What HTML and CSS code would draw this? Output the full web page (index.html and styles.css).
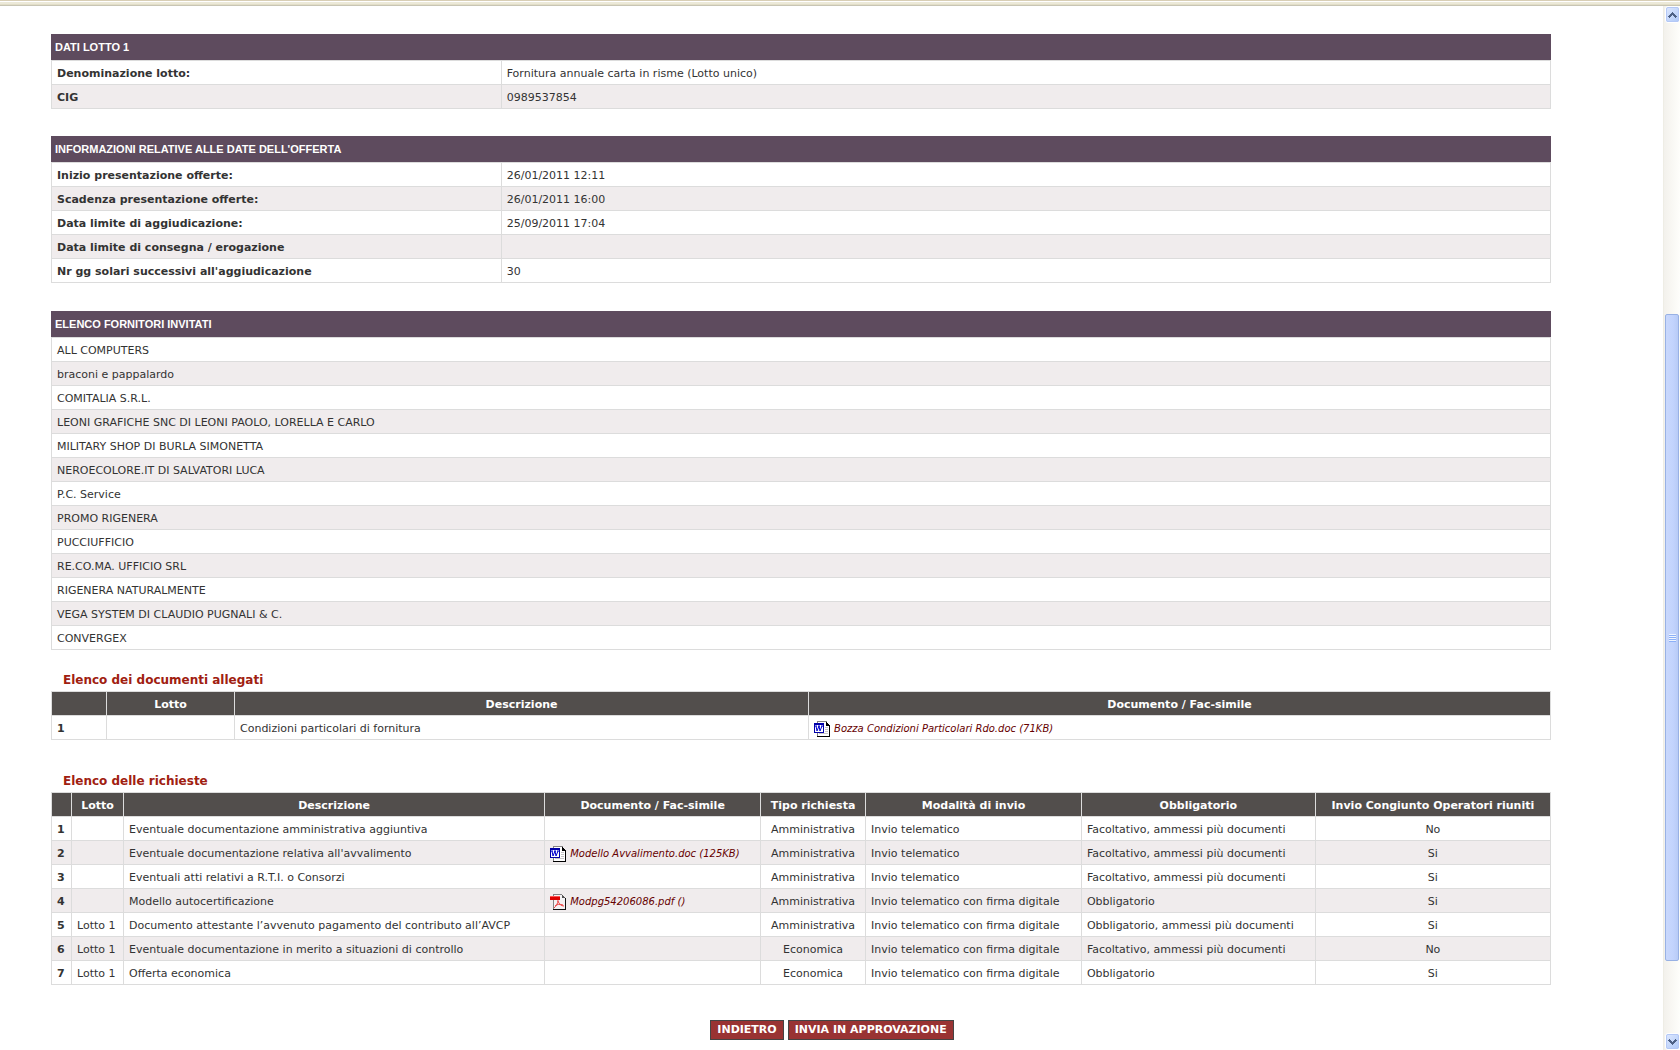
FILE: index.html
```html
<!DOCTYPE html>
<html lang="it">
<head>
<meta charset="utf-8">
<title>Riepilogo RdO</title>
<link rel="stylesheet" href="styles.css">
</head>
<body>
<svg class="defs" aria-hidden="true">
  <symbol id="icon-doc" viewBox="0 0 16 16">
    <path fill="#fff" d="M4 1h8l3 3v11H4z"/>
    <path fill="#848284" d="M3 0h10v1H4v14H3z"/>
    <path fill="#000" d="M12 1h1v1h1v1h1v1h1v12H3v-1h12V5h-3z"/>
    <path fill="#c6c3c6" d="M11 6h3v1h-3zM11 8h3v1h-3zM11 10h3v1h-3zM5 12h9v1H5z"/>
    <path fill="#0000a8" d="M0 2h10v10H0z"/>
    <path fill="#fff" d="M1 4h8v7H1z"/>
    <path fill="none" stroke="#0000d0" d="M1 5h2M4 5h2M2 5l1 5 2-5 1 5 2-5M7 5h2"/>
  </symbol>
  <symbol id="icon-pdf" viewBox="0 0 16 16">
    <path fill="#f4f2f4" d="M4 1h8l3 3v11H4z"/>
    <path fill="#848284" d="M3 0h9v1H4v14H3z"/>
    <path fill="#555" d="M12 1h1v1h1v1h1v1h-3z"/>
    <path fill="#111" d="M15 4h1v12H3v-1h12z"/>
    <path fill="#d00" d="M0 2h10v4H0z"/>
    <path fill="#f55" d="M0 2h10v1H0z"/>
    <path fill="none" stroke="#e44" d="M8 6c0 4-2 6-4 8M8 7c1 3 3 5 6 5M5 12c2-2 5-2 8-1"/>
  </symbol>
</svg>
<div class="toolbar-edge"></div>
<div class="viewport">
  <main class="content">
    <table class="sheet pairs">
      <caption>DATI LOTTO 1</caption>
      <tbody>
        <tr><th scope="row">Denominazione lotto:</th><td>Fornitura annuale carta in risme (Lotto unico)</td></tr>
        <tr><th scope="row">CIG</th><td>0989537854</td></tr>
      </tbody>
    </table>

    <table class="sheet pairs">
      <caption>INFORMAZIONI RELATIVE ALLE DATE DELL'OFFERTA</caption>
      <tbody>
        <tr><th scope="row">Inizio presentazione offerte:</th><td>26/01/2011 12:11</td></tr>
        <tr><th scope="row">Scadenza presentazione offerte:</th><td>26/01/2011 16:00</td></tr>
        <tr><th scope="row">Data limite di aggiudicazione:</th><td>25/09/2011 17:04</td></tr>
        <tr><th scope="row">Data limite di consegna / erogazione</th><td></td></tr>
        <tr><th scope="row">Nr gg solari successivi all'aggiudicazione</th><td>30</td></tr>
      </tbody>
    </table>

    <table class="sheet suppliers">
      <caption>ELENCO FORNITORI INVITATI</caption>
      <tbody>
        <tr><td>ALL COMPUTERS</td></tr>
        <tr><td>braconi e pappalardo</td></tr>
        <tr><td>COMITALIA S.R.L.</td></tr>
        <tr><td>LEONI GRAFICHE SNC DI LEONI PAOLO, LORELLA E CARLO</td></tr>
        <tr><td>MILITARY SHOP DI BURLA SIMONETTA</td></tr>
        <tr><td>NEROECOLORE.IT DI SALVATORI LUCA</td></tr>
        <tr><td>P.C. Service</td></tr>
        <tr><td>PROMO RIGENERA</td></tr>
        <tr><td>PUCCIUFFICIO</td></tr>
        <tr><td>RE.CO.MA. UFFICIO SRL</td></tr>
        <tr><td>RIGENERA NATURALMENTE</td></tr>
        <tr><td>VEGA SYSTEM DI CLAUDIO PUGNALI &amp; C.</td></tr>
        <tr><td>CONVERGEX</td></tr>
      </tbody>
    </table>

    <section class="listing">
      <h2>Elenco dei documenti allegati</h2>
      <table class="sheet">
        <colgroup><col class="w-index"><col class="w-lot"><col class="w-text"><col></colgroup>
        <thead>
          <tr><th></th><th scope="col">Lotto</th><th scope="col">Descrizione</th><th scope="col">Documento / Fac-simile</th></tr>
        </thead>
        <tbody>
          <tr><th scope="row">1</th><td></td><td>Condizioni particolari di fornitura</td><td><a class="file" href="#"><svg><use href="#icon-doc"/></svg>Bozza Condizioni Particolari Rdo.doc (71KB)</a></td></tr>
        </tbody>
      </table>
    </section>

    <section class="listing">
      <h2>Elenco delle richieste</h2>
      <table class="sheet">
        <colgroup><col class="w-number"><col class="w-lotto"><col class="w-description"><col class="w-medium"><col class="w-type"><col class="w-medium"><col class="w-wide"><col></colgroup>
        <thead>
          <tr><th></th><th scope="col">Lotto</th><th scope="col">Descrizione</th><th scope="col">Documento / Fac-simile</th><th scope="col">Tipo richiesta</th><th scope="col">Modalità di invio</th><th scope="col">Obbligatorio</th><th scope="col">Invio Congiunto Operatori riuniti</th></tr>
        </thead>
        <tbody>
          <tr><th scope="row">1</th><td></td><td>Eventuale documentazione amministrativa aggiuntiva</td><td></td><td class="mid">Amministrativa</td><td>Invio telematico</td><td>Facoltativo, ammessi più documenti</td><td class="mid">No</td></tr>
          <tr><th scope="row">2</th><td></td><td>Eventuale documentazione relativa all'avvalimento</td><td><a class="file" href="#"><svg><use href="#icon-doc"/></svg>Modello Avvalimento.doc (125KB)</a></td><td class="mid">Amministrativa</td><td>Invio telematico</td><td>Facoltativo, ammessi più documenti</td><td class="mid">Si</td></tr>
          <tr><th scope="row">3</th><td></td><td>Eventuali atti relativi a R.T.I. o Consorzi</td><td></td><td class="mid">Amministrativa</td><td>Invio telematico</td><td>Facoltativo, ammessi più documenti</td><td class="mid">Si</td></tr>
          <tr><th scope="row">4</th><td></td><td>Modello autocertificazione</td><td><a class="file" href="#"><svg><use href="#icon-pdf"/></svg>Modpg54206086.pdf ()</a></td><td class="mid">Amministrativa</td><td>Invio telematico con firma digitale</td><td>Obbligatorio</td><td class="mid">Si</td></tr>
          <tr><th scope="row">5</th><td>Lotto 1</td><td>Documento attestante l’avvenuto pagamento del contributo all’AVCP</td><td></td><td class="mid">Amministrativa</td><td>Invio telematico con firma digitale</td><td>Obbligatorio, ammessi più documenti</td><td class="mid">Si</td></tr>
          <tr><th scope="row">6</th><td>Lotto 1</td><td>Eventuale documentazione in merito a situazioni di controllo</td><td></td><td class="mid">Economica</td><td>Invio telematico con firma digitale</td><td>Facoltativo, ammessi più documenti</td><td class="mid">No</td></tr>
          <tr><th scope="row">7</th><td>Lotto 1</td><td>Offerta economica</td><td></td><td class="mid">Economica</td><td>Invio telematico con firma digitale</td><td>Obbligatorio</td><td class="mid">Si</td></tr>
        </tbody>
      </table>
    </section>

    <div class="actions">
      <button type="button">INDIETRO</button>
      <button type="button">INVIA IN APPROVAZIONE</button>
    </div>
  </main>

  <div class="scrollbar">
    <button type="button" class="arrow" aria-label="Scorri su"><svg viewBox="0 0 9 6"><path d="M4 0h1v1h1v1h1v1h1v1h1v1H8v1H7V5H6V4H5V3H4v1H3v1H2v1H1V5H0V4h1V3h1V2h1V1h1z"/></svg></button>
    <div class="track-above"></div>
    <div class="thumb"><span class="grip"></span></div>
    <div class="track-below"></div>
    <button type="button" class="arrow" aria-label="Scorri giù"><svg viewBox="0 0 9 6"><path d="M4 6h1V5h1V4h1V3h1V2h1V1H8V0H7v1H6v1H5v1H4V2H3V1H2V0H1v1H0v1h1v1h1v1h1v1h1z"/></svg></button>
  </div>
</div>
</body>
</html>
```
FILE: styles.css
```css
* { box-sizing: border-box; }

body {
  margin: 0;
  min-height: 100vh;
  display: flex;
  flex-direction: column;
  background: #fff;
  color: #333;
  font: 11px/15px Verdana, "DejaVu Sans", sans-serif;
}

.defs { display: none; }

.toolbar-edge {
  height: 6px;
  background: linear-gradient(#d8ceb5 0 1px, #fff 1px 2px, #ece9d8 2px 4px, #e2dec8 4px 5px, #c8c5b4 5px);
}

.viewport {
  flex: 1;
  display: flex;
}

.content {
  flex: 1;
  padding: 28px 112px 0 51px;
}

.sheet {
  width: 100%;
  table-layout: fixed;
  border-collapse: collapse;
  margin-bottom: 27px;
}

.suppliers { margin: 28px 0 23px; }

.sheet caption {
  padding: 6px 4px 5px;
  background: #5e4b5e;
  color: #fff;
  text-align: left;
  font: bold 11px/15px Arial, "Liberation Sans", sans-serif;
}

.sheet th,
.sheet td {
  height: 24px;
  padding: 5px 5px 3px;
  border: 1px solid #dcdcdc;
  text-align: left;
  white-space: nowrap;
}

.sheet tbody tr:nth-child(even) { background: #f0eced; }

.sheet thead th {
  background: #524e4c;
  color: #fff;
  text-align: center;
}

.sheet td.mid { text-align: center; }

.pairs th { width: 30%; }

.listing h2 {
  margin: 0;
  padding: 0 12px 3px;
  color: #a02010;
  font-size: 12px;
  line-height: 15px;
}

.listing { margin-bottom: 34px; }
.listing .sheet { margin: 0; }

.w-index { width: 55px; }
.w-lot { width: 128px; }
.w-text { width: 38.3%; }
.w-number { width: 20px; }
.w-lotto { width: 52px; }
.w-description { width: 28.1%; }
.w-medium { width: 14.4%; }
.w-type { width: 105px; }
.w-wide { width: 15.6%; }

.file {
  display: flex;
  align-items: center;
  gap: 4px;
  height: 15px;
  color: #600;
  font-size: 10px;
  font-style: italic;
  text-decoration: none;
}

.file svg {
  flex: none;
  width: 16px;
  height: 16px;
}

.actions {
  display: flex;
  justify-content: center;
  gap: 4px;
  padding: 1px 0 0 62px;
}

.actions button {
  height: 20px;
  padding: 0 6px;
  border: 1px solid #444;
  background: #933;
  color: #fff;
  font: bold 11px/16px Verdana, "DejaVu Sans", sans-serif;
}

.scrollbar {
  flex: none;
  width: 17px;
  display: flex;
  flex-direction: column;
  padding: 0 1px;
  border-left: 1px solid #eeede5;
  background: linear-gradient(90deg, #f3f1ec, #fefefb);
}

.arrow {
  flex: none;
  display: flex;
  align-items: center;
  justify-content: center;
  width: 15px;
  height: 17px;
  padding: 0;
  border: 1px solid #fff;
  border-radius: 3px;
  outline: 1px solid #b4c8f6;
  outline-offset: -2px;
  background: linear-gradient(135deg, #dfe9ff, #aec8f7);
}

.arrow svg {
  width: 9px;
  height: 6px;
  fill: #4d6185;
}

.track-above { flex: 292; }
.track-below { flex: 72; }

.thumb {
  flex: 646;
  display: flex;
  align-items: center;
  justify-content: center;
  border: 1px solid #98b1e4;
  border-radius: 2px;
  background: linear-gradient(90deg, #c9d8fc, #c2d3fd 60%, #b8cbf6);
}

.grip {
  width: 7px;
  height: 8px;
  background: repeating-linear-gradient(#eef4fe 0 1px, #8cb0f8 1px 2px);
}
```
